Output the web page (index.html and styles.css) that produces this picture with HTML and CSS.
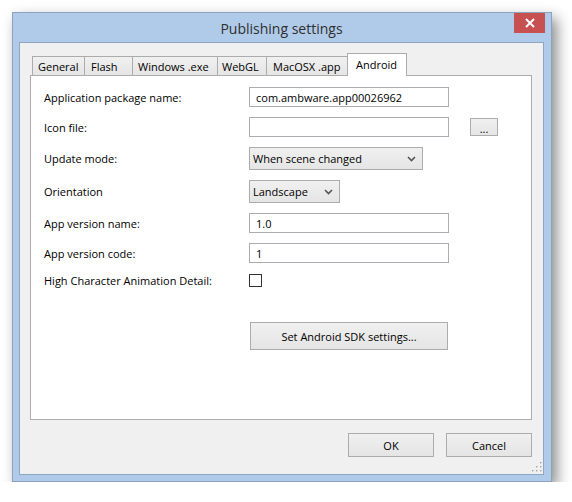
FILE: index.html
```html
<!DOCTYPE html>
<html>
<head>
<meta charset="utf-8">
<link rel="stylesheet" href="styles.css">
</head>
<body>
<div class="window">
  <div class="titlebar">
    <span class="title">Publishing settings</span>
    <div class="close">
      <svg width="10" height="10" viewBox="0 0 10 10"><path d="M1 1 L9 9 M9 1 L1 9" stroke="#fff" stroke-width="2"/></svg>
    </div>
  </div>
  <div class="client">
    <div class="tabs">
      <div class="tab t-general">General</div>
      <div class="tab t-flash">Flash</div>
      <div class="tab t-win">Windows .exe</div>
      <div class="tab t-webgl">WebGL</div>
      <div class="tab t-mac">MacOSX .app</div>
      <div class="tab active t-android">Android</div>
    </div>
    <div class="panel">
      <div class="form">
        <div class="row">
          <label class="label">Application package name:</label>
          <div class="input wide">com.ambware.app00026962</div>
        </div>
        <div class="row">
          <label class="label">Icon file:</label>
          <div class="input wide"></div>
          <div class="button browse">...</div>
        </div>
        <div class="row">
          <label class="label">Update mode:</label>
          <div class="select mode"><span>When scene changed</span>
            <svg class="chev" width="9" height="6" viewBox="0 0 9 6"><path d="M1 1 L4.5 4.5 L8 1" fill="none" stroke="#555" stroke-width="1.6"/></svg>
          </div>
        </div>
        <div class="row">
          <label class="label">Orientation</label>
          <div class="select orient"><span>Landscape</span>
            <svg class="chev" width="9" height="6" viewBox="0 0 9 6"><path d="M1 1 L4.5 4.5 L8 1" fill="none" stroke="#555" stroke-width="1.6"/></svg>
          </div>
        </div>
        <div class="row">
          <label class="label">App version name:</label>
          <div class="input wide">1.0</div>
        </div>
        <div class="row">
          <label class="label">App version code:</label>
          <div class="input wide">1</div>
        </div>
        <div class="row">
          <label class="label">High Character Animation Detail:</label>
          <div class="checkbox"></div>
        </div>
        <div class="row sdk-row">
          <div class="button sdk">Set Android SDK settings...</div>
        </div>
      </div>
    </div>
    <div class="actions">
      <div class="button dlg">OK</div>
      <div class="button dlg">Cancel</div>
    </div>
    <svg class="grip" width="10" height="10" viewBox="0 0 10 10">
      <g fill="#fff"><rect x="9" y="1" width="1" height="1"/><rect x="5" y="5" width="1" height="1"/><rect x="9" y="5" width="1" height="1"/><rect x="1" y="9" width="1" height="1"/><rect x="5" y="9" width="1" height="1"/><rect x="9" y="9" width="1" height="1"/></g>
      <g fill="#a8a8a8"><rect x="8" y="0" width="1.5" height="1.5"/><rect x="4" y="4" width="1.5" height="1.5"/><rect x="8" y="4" width="1.5" height="1.5"/><rect x="0" y="8" width="1.5" height="1.5"/><rect x="4" y="8" width="1.5" height="1.5"/><rect x="8" y="8" width="1.5" height="1.5"/></g>
    </svg>
  </div>
</div>
</body>
</html>
```
FILE: styles.css
```css
html, body {
  margin: 0;
  padding: 0;
  background: #ffffff;
}
body {
  font-family: "Open Sans", "Noto Sans", "Liberation Sans", sans-serif;
  font-size: 11px;
  color: #000;
}
.window {
  margin: 12px 0 0 12px;
  width: 540px;
  height: 470px;
  box-sizing: border-box;
  border: 1px solid #8da2bd;
  background: #afcbe9;
  padding: 0 7px 6px 6px;
  display: flex;
  flex-direction: column;
  box-shadow: 5px 6px 13px rgba(0, 0, 0, 0.45);
}
.titlebar {
  height: 29px;
  display: flex;
  align-items: center;
  justify-content: center;
  position: relative;
}
.title {
  font-size: 14px;
  color: #2f2f2f;
  padding-top: 1px;
}
.close {
  position: absolute;
  top: 0;
  right: -1px;
  width: 31px;
  height: 20px;
  background: #c75050;
  display: flex;
  align-items: center;
  justify-content: center;
}
.client {
  flex: 1;
  border: 1px solid #8fa5c0;
  background: #f0f0f0;
  padding: 10px 11px 0 10px;
  display: flex;
  flex-direction: column;
  position: relative;
}
.tabs {
  display: flex;
  align-items: flex-end;
  height: 22px;
  padding-left: 2px;
}
.tab {
  box-sizing: border-box;
  height: 19px;
  border: 1px solid #acacac;
  border-bottom: none;
  background: linear-gradient(#f0f0f0, #e5e5e5);
  margin-right: -1px;
  padding-left: 5px;
  display: flex;
  align-items: center;
  white-space: nowrap;
}
.t-general { width: 53px; }
.t-flash { width: 49px; padding-left: 6px; }
.t-win { width: 86px; }
.t-webgl { width: 50px; padding-left: 4px; }
.t-mac { width: 83px; padding-left: 6px; }
.tab.active {
  height: 23px;
  margin-bottom: -1px;
  margin-left: -1px;
  width: 60px;
  padding-left: 8px;
  padding-bottom: 1px;
  background: #ffffff;
  position: relative;
  z-index: 1;
}
.panel {
  height: 345px;
  box-sizing: border-box;
  border: 1px solid #adadad;
  background: #ffffff;
  padding: 11px 0 0 13px;
}
.form {
  display: flex;
  flex-direction: column;
  gap: 10px;
}
.row {
  display: flex;
  align-items: center;
}
.label {
  width: 205px;
  flex: none;
}
.input {
  box-sizing: border-box;
  height: 20px;
  border: 1px solid #abadb3;
  background: #fff;
  padding-left: 6px;
  display: flex;
  align-items: center;
  white-space: nowrap;
}
.wide { width: 200px; }
.button {
  box-sizing: border-box;
  border: 1px solid #acacac;
  background: linear-gradient(#f0f0f0, #e5e5e5);
  display: flex;
  align-items: center;
  justify-content: center;
  white-space: nowrap;
}
.browse {
  width: 28px;
  height: 18px;
  margin-left: 21px;
  padding-top: 2px;
}
.select {
  box-sizing: border-box;
  height: 23px;
  border: 1px solid #acacac;
  background: linear-gradient(#f0f0f0, #e5e5e5);
  padding-left: 3px;
  padding-right: 6px;
  display: flex;
  align-items: center;
  justify-content: space-between;
}
.mode { width: 174px; }
.orient { width: 91px; }
.checkbox {
  box-sizing: border-box;
  width: 13px;
  height: 13px;
  border: 1px solid #333;
  background: #fff;
}
.sdk-row {
  margin-top: 24px;
}
.sdk {
  margin-left: 206px;
  width: 198px;
  height: 28px;
}
.actions {
  display: flex;
  justify-content: flex-end;
  gap: 12px;
  margin-top: 13px;
  padding-right: 0;
}
.dlg {
  width: 86px;
  height: 24px;
}
.grip {
  position: absolute;
  right: 1px;
  bottom: 2px;
}
```
